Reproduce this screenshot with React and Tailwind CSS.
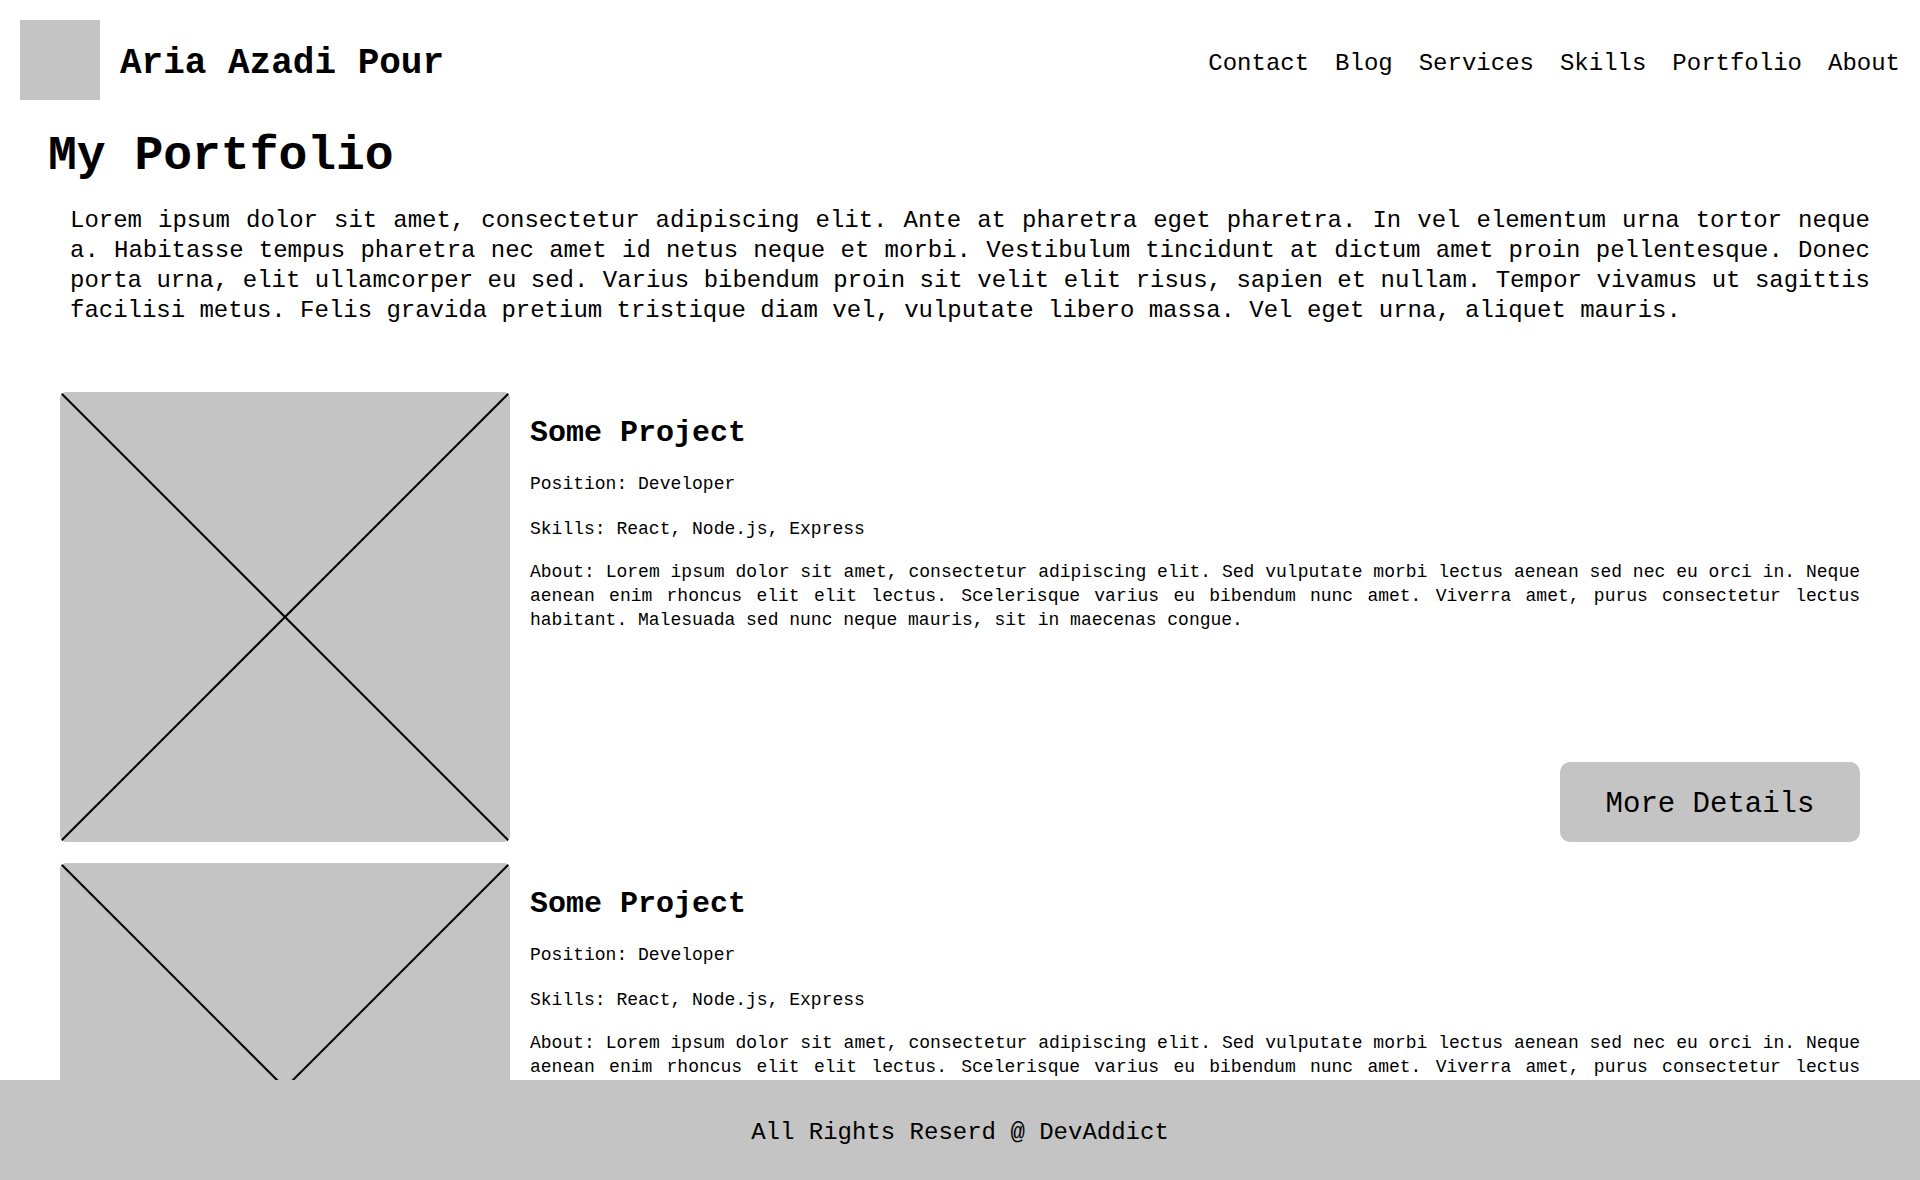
import React from 'react';

const navLinks = ['Contact', 'Blog', 'Services', 'Skills', 'Portfolio', 'About'];

const projects = [
  {
    id: 1,
    title: 'Some Project',
    position: 'Developer',
    skills: 'React, Node.js, Express',
    about:
      'Lorem ipsum dolor sit amet, consectetur adipiscing elit. Sed vulputate morbi lectus aenean sed nec eu orci in. Neque aenean enim rhoncus elit elit lectus. Scelerisque varius eu bibendum nunc amet. Viverra amet, purus consectetur lectus habitant. Malesuada sed nunc neque mauris, sit in maecenas congue.',
  },
  {
    id: 2,
    title: 'Some Project',
    position: 'Developer',
    skills: 'React, Node.js, Express',
    about:
      'Lorem ipsum dolor sit amet, consectetur adipiscing elit. Sed vulputate morbi lectus aenean sed nec eu orci in. Neque aenean enim rhoncus elit elit lectus. Scelerisque varius eu bibendum nunc amet. Viverra amet, purus consectetur lectus habitant. Malesuada sed nunc neque mauris, sit in maecenas congue.',
  },
];

// placeholder image with the crossed lines
function Placeholder() {
  return (
    <div className="relative w-[450px] h-[450px] shrink-0 rounded-[6px] bg-[#c4c4c4] overflow-hidden">
      <svg className="absolute inset-0 w-full h-full" viewBox="0 0 450 450" preserveAspectRatio="none">
        <line x1="0" y1="0" x2="450" y2="450" stroke="#000" strokeWidth="2" />
        <line x1="450" y1="0" x2="0" y2="450" stroke="#000" strokeWidth="2" />
      </svg>
    </div>
  );
}

function ProjectCard({ project }) {
  return (
    <div className="flex gap-[20px] h-[450px]">
      <Placeholder />
      <div className="flex-1 flex flex-col">
        <h2 className="mt-[23px] text-[30px] leading-[36px] font-bold">{project.title}</h2>
        <p className="mt-[21px] text-[18px] leading-[24px]">Position: {project.position}</p>
        <p className="mt-[21px] text-[18px] leading-[24px]">Skills: {project.skills}</p>
        <p className="mt-[19px] text-[18px] leading-[24px] text-justify">About: {project.about}</p>
        <button className="mt-auto self-end w-[300px] h-[80px] pt-[6px] rounded-[10px] bg-[#c4c4c4] text-[29px] text-black">
          More Details
        </button>
      </div>
    </div>
  );
}

export default function App() {
  return (
    <div className="min-h-screen bg-white text-black font-['Liberation_Mono','DejaVu_Sans_Mono',monospace]">
      {/* Header */}
      <header className="flex items-center justify-between px-[20px] pt-[20px]">
        <div className="flex items-center">
          <div className="w-[80px] h-[80px] bg-[#c4c4c4]" />
          <span className="ml-[20px] mt-[8px] text-[36px] font-bold">Aria Azadi Pour</span>
        </div>
        <nav className="flex gap-[26px] mt-[7px] text-[24px]">
          {navLinks.map(link => (
            <a key={link} href="#" className="text-black">{link}</a>
          ))}
        </nav>
      </header>

      <main className="pb-[120px]">
        <h1 className="mt-[27px] ml-[48px] text-[48px] leading-[58px] font-bold">My Portfolio</h1>
        <p className="mt-[21px] ml-[70px] mr-[50px] text-[24px] leading-[30px] tracking-[-0.02px] text-justify">
          Lorem ipsum dolor sit amet, consectetur adipiscing elit. Ante at pharetra eget pharetra. In vel elementum urna tortor neque a. Habitasse tempus pharetra nec amet id netus neque et morbi. Vestibulum tincidunt at dictum amet proin pellentesque. Donec porta urna, elit ullamcorper eu sed. Varius bibendum proin sit velit elit risus, sapien et nullam. Tempor vivamus ut sagittis facilisi metus. Felis gravida pretium tristique diam vel, vulputate libero massa. Vel eget urna, aliquet mauris.
        </p>

        <div className="mt-[66px] mx-[60px] flex flex-col gap-[21px]">
          {projects.map(p => (
            <ProjectCard key={p.id} project={p} />
          ))}
        </div>
      </main>

      {/* Footer */}
      <footer className="fixed bottom-0 left-0 w-full h-[100px] pt-[6px] bg-[#c4c4c4] flex items-center justify-center text-[24px]">
        All Rights Reserd @ DevAddict
      </footer>
    </div>
  );
}
